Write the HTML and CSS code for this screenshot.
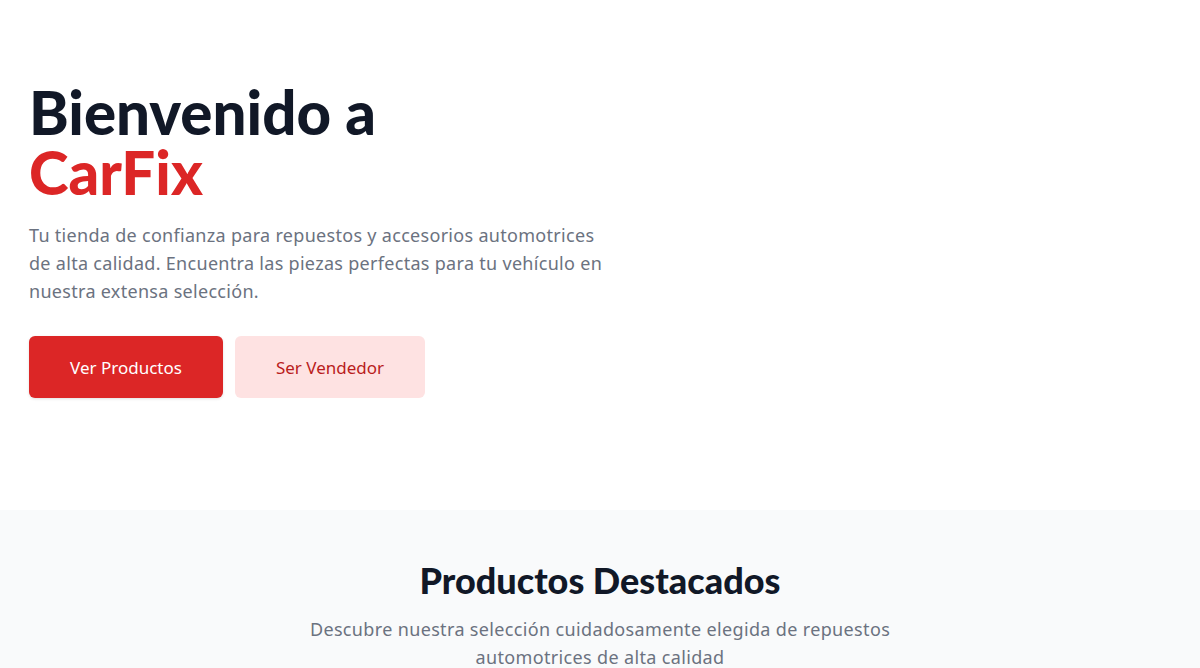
FILE: index.html
```html
<!DOCTYPE html>
<html lang="es">
<head>
<meta charset="utf-8">
<title>CarFix</title>
<link rel="stylesheet" href="styles.css">
</head>
<body>
<section class="hero">
  <div class="hero-inner">
    <h1 class="hero-title">Bienvenido a<br><span class="brand">CarFix</span></h1>
    <p class="hero-text">Tu tienda de confianza para repuestos y accesorios automotrices de alta calidad. Encuentra las piezas perfectas para tu vehículo en nuestra extensa selección.</p>
    <div class="hero-actions">
      <a class="btn btn-primary" href="#">Ver Productos</a>
      <a class="btn btn-secondary" href="#">Ser Vendedor</a>
    </div>
  </div>
</section>
<section class="featured">
  <h2 class="featured-title">Productos Destacados</h2>
  <p class="featured-text">Descubre nuestra selección cuidadosamente elegida de repuestos automotrices de alta calidad</p>
</section>
</body>
</html>
```
FILE: styles.css
```css
* { box-sizing: border-box; }
html, body { margin: 0; padding: 0; }
body {
  font-family: "Noto Sans", "Open Sans", sans-serif;
  background: #ffffff;
  color: #111827;
}
.hero {
  height: 510px;
  padding: 82px 29px 0;
}
.hero-title {
  margin: 0;
  font-family: Lato, sans-serif;
  font-weight: 900;
  font-size: 60px;
  line-height: 60px;
  color: #111827;
}
.brand { color: #dc2626; }
.hero-text {
  margin: 19px 0 0;
  max-width: 576px;
  font-size: 18px;
  line-height: 28px;
  letter-spacing: 0.3px;
  color: #6b7280;
}
.hero-actions {
  display: flex;
  gap: 12px;
  margin-top: 31px;
}
.btn {
  display: flex;
  align-items: center;
  justify-content: center;
  height: 62px;
  border-radius: 6px;
  font-size: 17px;
  text-decoration: none;
}
.btn-primary {
  width: 194px;
  background: #dc2626;
  color: #ffffff;
  box-shadow: 0 1px 3px rgba(0,0,0,0.12);
}
.btn-secondary {
  width: 190px;
  background: #fee2e2;
  color: #b91c1c;
}
.featured {
  background: #f9fafb;
  padding: 50px 20px 40px;
  text-align: center;
  min-height: 200px;
}
.featured-title {
  margin: 0;
  font-family: Lato, sans-serif;
  font-weight: 900;
  font-size: 36px;
  line-height: 40px;
  color: #111827;
}
.featured-text {
  margin: 15px auto 0;
  max-width: 672px;
  font-size: 18px;
  line-height: 28px;
  letter-spacing: 0.35px;
  color: #6b7280;
}
```
